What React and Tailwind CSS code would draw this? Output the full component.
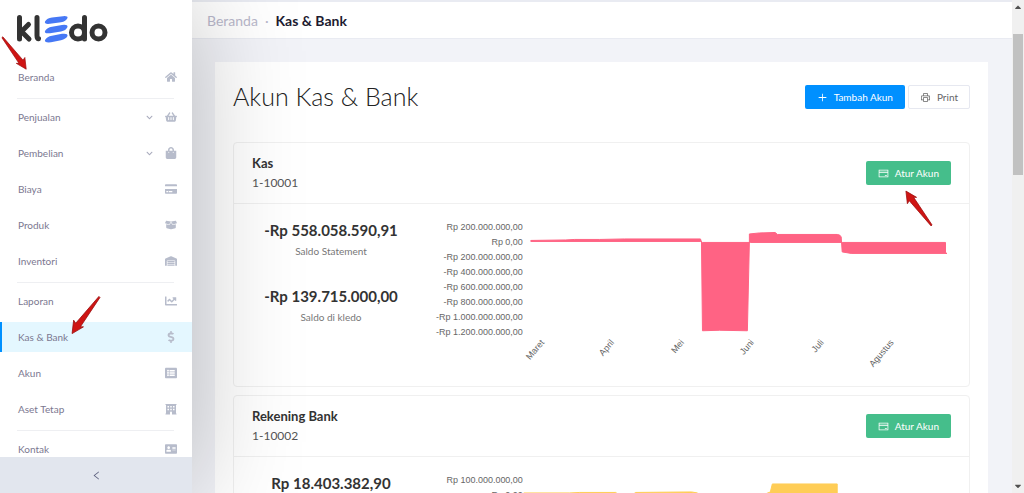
import React from "react";
import {
  FaHome, FaShoppingBasket, FaShoppingBag, FaCreditCard, FaBoxOpen, FaWarehouse,
  FaChartLine, FaDollarSign, FaListAlt, FaAddressCard, FaChevronDown,
  FaCaretUp, FaCaretDown,
} from "react-icons/fa";
import { AiOutlinePlus, AiOutlinePrinter, AiOutlineCreditCard, AiOutlineLeft } from "react-icons/ai";

function BuildingIcon({ className }) {
  return (
    <svg viewBox="0 0 12 12" className={className} fill="currentColor" aria-hidden="true">
      <path
        fillRule="evenodd"
        d="M0.500 1H11.500V2H11V10.500H11.500V11.500H7V9.500A1 1 0 0 0 5 9.500V11.500H0.500V10.500H1V2H0.500ZM2.500 3V4.500H4V3ZM5.250 3V4.500H6.750V3ZM8 3V4.500H9.500V3ZM2.500 5.750V7.250H4V5.750ZM5.250 5.750V7.250H6.750V5.750ZM8 5.750V7.250H9.500V5.750Z"
      />
    </svg>
  );
}

const menu = [
  [{ label: "Beranda", icon: FaHome }],
  [
    { label: "Penjualan", icon: FaShoppingBasket, sub: true },
    { label: "Pembelian", icon: FaShoppingBag, sub: true },
    { label: "Biaya", icon: FaCreditCard },
    { label: "Produk", icon: FaBoxOpen },
    { label: "Inventori", icon: FaWarehouse },
  ],
  [
    { label: "Laporan", icon: FaChartLine },
    { label: "Kas & Bank", icon: FaDollarSign, active: true },
    { label: "Akun", icon: FaListAlt },
    { label: "Aset Tetap", icon: BuildingIcon },
  ],
  [{ label: "Kontak", icon: FaAddressCard }],
];

function Logo() {
  return (
    <svg viewBox="0 0 92 28" className="h-7 w-[92px]" role="img" aria-label="kledo">
      <g fill="none" stroke="#333" strokeWidth="5" strokeLinecap="round" strokeLinejoin="round">
        <path d="M3.500 2.500V24" />
        <path d="M12.500 9.500L5.500 16.500L13 24" />
        <path d="M21 2.500V20.500Q21 23.500 22.500 23.800" />
        <circle cx="62" cy="17.500" r="6.500" />
        <path d="M68.500 2.500V24" />
        <circle cx="82.500" cy="17.500" r="6.500" />
      </g>
      <g fill="#4678f5">
        <path d="M29 6.500Q31 3 36 2.500L47 1.200Q52 0.700 51.500 3Q50 6.500 45 7.300L34 8.800Q28 9.500 29 6.500Z" />
        <path d="M29 16Q31 12.500 36 11.800L46 10Q52 9.300 51.500 12Q50 15.500 45 16.500L34 18.200Q28 19 29 16Z" />
        <path d="M29 25Q31 21.500 36 20.800L46 18.800Q52 18 51.500 21Q50 24 45 25.300L35 27.300Q28 28 29 25Z" />
      </g>
    </svg>
  );
}

function MenuItem({ label, icon: Icon, sub, active }) {
  return (
    <li className="mb-1.5">
      <a
        href="#"
        aria-current={active ? "page" : undefined}
        className={
          active
            ? "flex h-[30px] items-center border-l-2 border-[#0090ff] bg-[#e4f7ff] pr-[15px] pl-4 text-[10px] text-[#7b7890]"
            : "flex h-[30px] items-center pr-[15px] pl-[18px] text-[10px] text-[#7b7890]"
        }
      >
        <span className="flex-1">{label}</span>
        {sub && <FaChevronDown className="mr-3 size-[7px] text-[#a9abbd]" />}
        <span className="flex w-3 justify-end">
          <Icon className="h-3 w-auto max-w-3 text-[#b7bccb]" />
        </span>
      </a>
    </li>
  );
}

function Sidebar() {
  return (
    <aside className="relative z-10 flex w-48 shrink-0 flex-col bg-white shadow-[0_0_110px_rgba(0,0,0,0.25)]">
      <div className="h-[62px] shrink-0 px-4 pt-[15px]">
        <Logo />
      </div>
      <nav className="min-h-0 flex-1 overflow-hidden">
        {menu.map((group, i) => (
          <React.Fragment key={i}>
            {i > 0 && <hr className="mr-[18px] mb-[3px] ml-[17px] border-[#eeeff2]" />}
            <ul>
              {group.map((item) => (
                <MenuItem key={item.label} {...item} />
              ))}
            </ul>
          </React.Fragment>
        ))}
      </nav>
      <button aria-label="Tutup menu" className="flex h-9 shrink-0 items-center justify-center bg-[#e2e6ee] text-[#5f6380]">
        <AiOutlineLeft className="size-[11px]" />
      </button>
    </aside>
  );
}

function AreaChart({ labels, months, area, color }) {
  return (
    <svg viewBox="0 0 522 165" className="w-full" role="img" aria-label="Grafik saldo">
      <path d={area} fill={color} stroke={color} strokeWidth="1" strokeLinejoin="round" />
      <g className="fill-[#666] font-['Liberation_Sans',sans-serif] text-[9px]">
        {labels.map((l, i) => (
          <text key={l} x="93" y={18 + i * 15} textAnchor="end">{l}</text>
        ))}
        {months.map((m, i) => (
          <text key={m} transform={"translate(" + (115 + i * 70) + " 131) rotate(-50)"} textAnchor="end">{m}</text>
        ))}
      </g>
    </svg>
  );
}

function Stat({ value, label }) {
  return (
    <div className="text-center">
      <div className="text-[15px] leading-5 font-bold whitespace-nowrap text-[#333]">{value}</div>
      {label && <div className="text-[10px] leading-[22px] text-[#777]">{label}</div>}
    </div>
  );
}

function AccountCard({ name, code, stats, chart }) {
  return (
    <section className="mb-2 rounded-sm border border-[#f0f0f0]">
      <header className="flex h-[61px] items-center justify-between border-b border-[#f0f0f0] px-[18px]">
        <div>
          <h2 className="text-[13px] leading-5 font-bold text-[#333]">{name}</h2>
          <p className="text-[12px] leading-5 text-[#555]">{code}</p>
        </div>
        <button className="flex h-6 items-center gap-1.5 rounded-xs bg-[#45be8b] px-3 text-[10px] text-white">
          <AiOutlineCreditCard className="size-[11px]" />
          Atur Akun
        </button>
      </header>
      <div className="flex min-h-[182px] px-[18px]">
        <div className="flex w-[158px] shrink-0 flex-col gap-6 pt-4">
          {stats.map((s) => (
            <Stat key={s.value} {...s} />
          ))}
        </div>
        <div className="min-w-0 flex-1 pt-2 pl-5">
          <AreaChart {...chart} />
        </div>
      </div>
    </section>
  );
}

const accounts = [
  {
    name: "Kas",
    code: "1-10001",
    stats: [
      { value: "-Rp 558.058.590,91", label: "Saldo Statement" },
      { value: "-Rp 139.715.000,00", label: "Saldo di kledo" },
    ],
    chart: {
      color: "#ff6384",
      months: ["Maret", "April", "Mei", "Juni", "Juli", "Agustus"],
      labels: [
        "Rp 200.000.000,00", "Rp 0,00", "-Rp 200.000.000,00", "-Rp 400.000.000,00",
        "-Rp 600.000.000,00", "-Rp 800.000.000,00", "-Rp 1.000.000.000,00", "-Rp 1.200.000.000,00",
      ],
      area: "M101 29.500V28.500L136 28L145 27.500H170L195 27H271L272 30L273 119L290 118.500L318 119L320 30V22L330 21L346 20.500L348 22.500H408Q411 22.500 412 25L413 40L422 41.500H518L516.500 41V30.500H413H321H273L271 29.500H101Z",
    },
  },
  {
    name: "Rekening Bank",
    code: "1-10002",
    stats: [{ value: "Rp 18.403.382,90" }],
    chart: {
      color: "#ffcd56",
      months: [],
      labels: ["Rp 100.000.000,00", "Rp 0,00"],
      area: "M94 29.500V28L140 28L150 27.500H186L188 29H204L206 27.500L262 27L268 28V29H336L341 27L343 19H408V29.500Z",
    },
  },
];

function Scrollbar() {
  return (
    <div aria-hidden="true" className="flex w-3 shrink-0 flex-col items-center bg-[#f0f0f0] text-[#505050]">
      <FaCaretUp className="mt-0.5 size-2.5" />
      <div className="mt-[22px] h-[141px] w-2.5 bg-[#c1c1c1]" />
      <FaCaretDown className="mt-auto mb-0.5 size-2.5" />
    </div>
  );
}

function Arrow({ className, flip }) {
  return (
    <svg viewBox="0 0 32 40" className={className} aria-hidden="true">
      <g transform={flip}>
        <path d="M3 2L2 3L21 31.500L18 31.500L29 38L27.500 25L25.500 28Z" fill="#cf1413" stroke="#9c0d0d" strokeWidth="0.800" strokeLinejoin="round" />
      </g>
    </svg>
  );
}

export default function App() {
  return (
    <div className="relative flex h-screen overflow-hidden bg-[#f2f3f8] font-[Lato,sans-serif]">
      <Sidebar />
      <div className="min-w-0 flex-1 overflow-hidden">
        <div className="border-t-2 border-b border-[#e9ebf2] bg-white">
          <nav aria-label="Breadcrumb" className="flex h-9 items-center gap-[7px] px-[15px] text-[14px]">
            <a href="#" className="text-[#b9b8cb]">Beranda</a>
            <span className="text-[#b9b8cb]">·</span>
            <span className="font-bold text-[#1d1b30]">Kas &amp; Bank</span>
          </nav>
        </div>
        <main className="mt-[23px] mr-6 ml-[23px] bg-white px-[18px] pt-4 pb-4">
          <div className="mb-[26px] flex h-[38px] items-center justify-between">
            <h1 className="text-[25px] font-light text-[#222]">Akun Kas &amp; Bank</h1>
            <div className="flex gap-[3px]">
              <button className="flex h-6 items-center gap-1.5 rounded-xs bg-[#0090ff] px-3 text-[10px] text-white">
                <AiOutlinePlus className="size-[11px]" />
                Tambah Akun
              </button>
              <button className="flex h-6 items-center gap-1.5 rounded-xs border border-[#e6e8f0] bg-white px-[11px] text-[10px] text-[#666]">
                <AiOutlinePrinter className="size-[11px]" />
                Print
              </button>
            </div>
          </div>
          {accounts.map((a) => (
            <AccountCard key={a.code} {...a} />
          ))}
        </main>
      </div>
      <Scrollbar />
      <div className="pointer-events-none absolute inset-0 z-20">
        <Arrow className="absolute top-[35px] left-0 h-[36px] w-[29px]" />
        <Arrow className="absolute top-[294px] left-[69px] h-[42px] w-[33px]" flip="translate(32 0) scale(-1 1)" />
        <Arrow className="absolute top-[189px] left-[903px] h-[39px] w-[31px]" flip="translate(32 40) scale(-1 -1)" />
      </div>
    </div>
  );
}
